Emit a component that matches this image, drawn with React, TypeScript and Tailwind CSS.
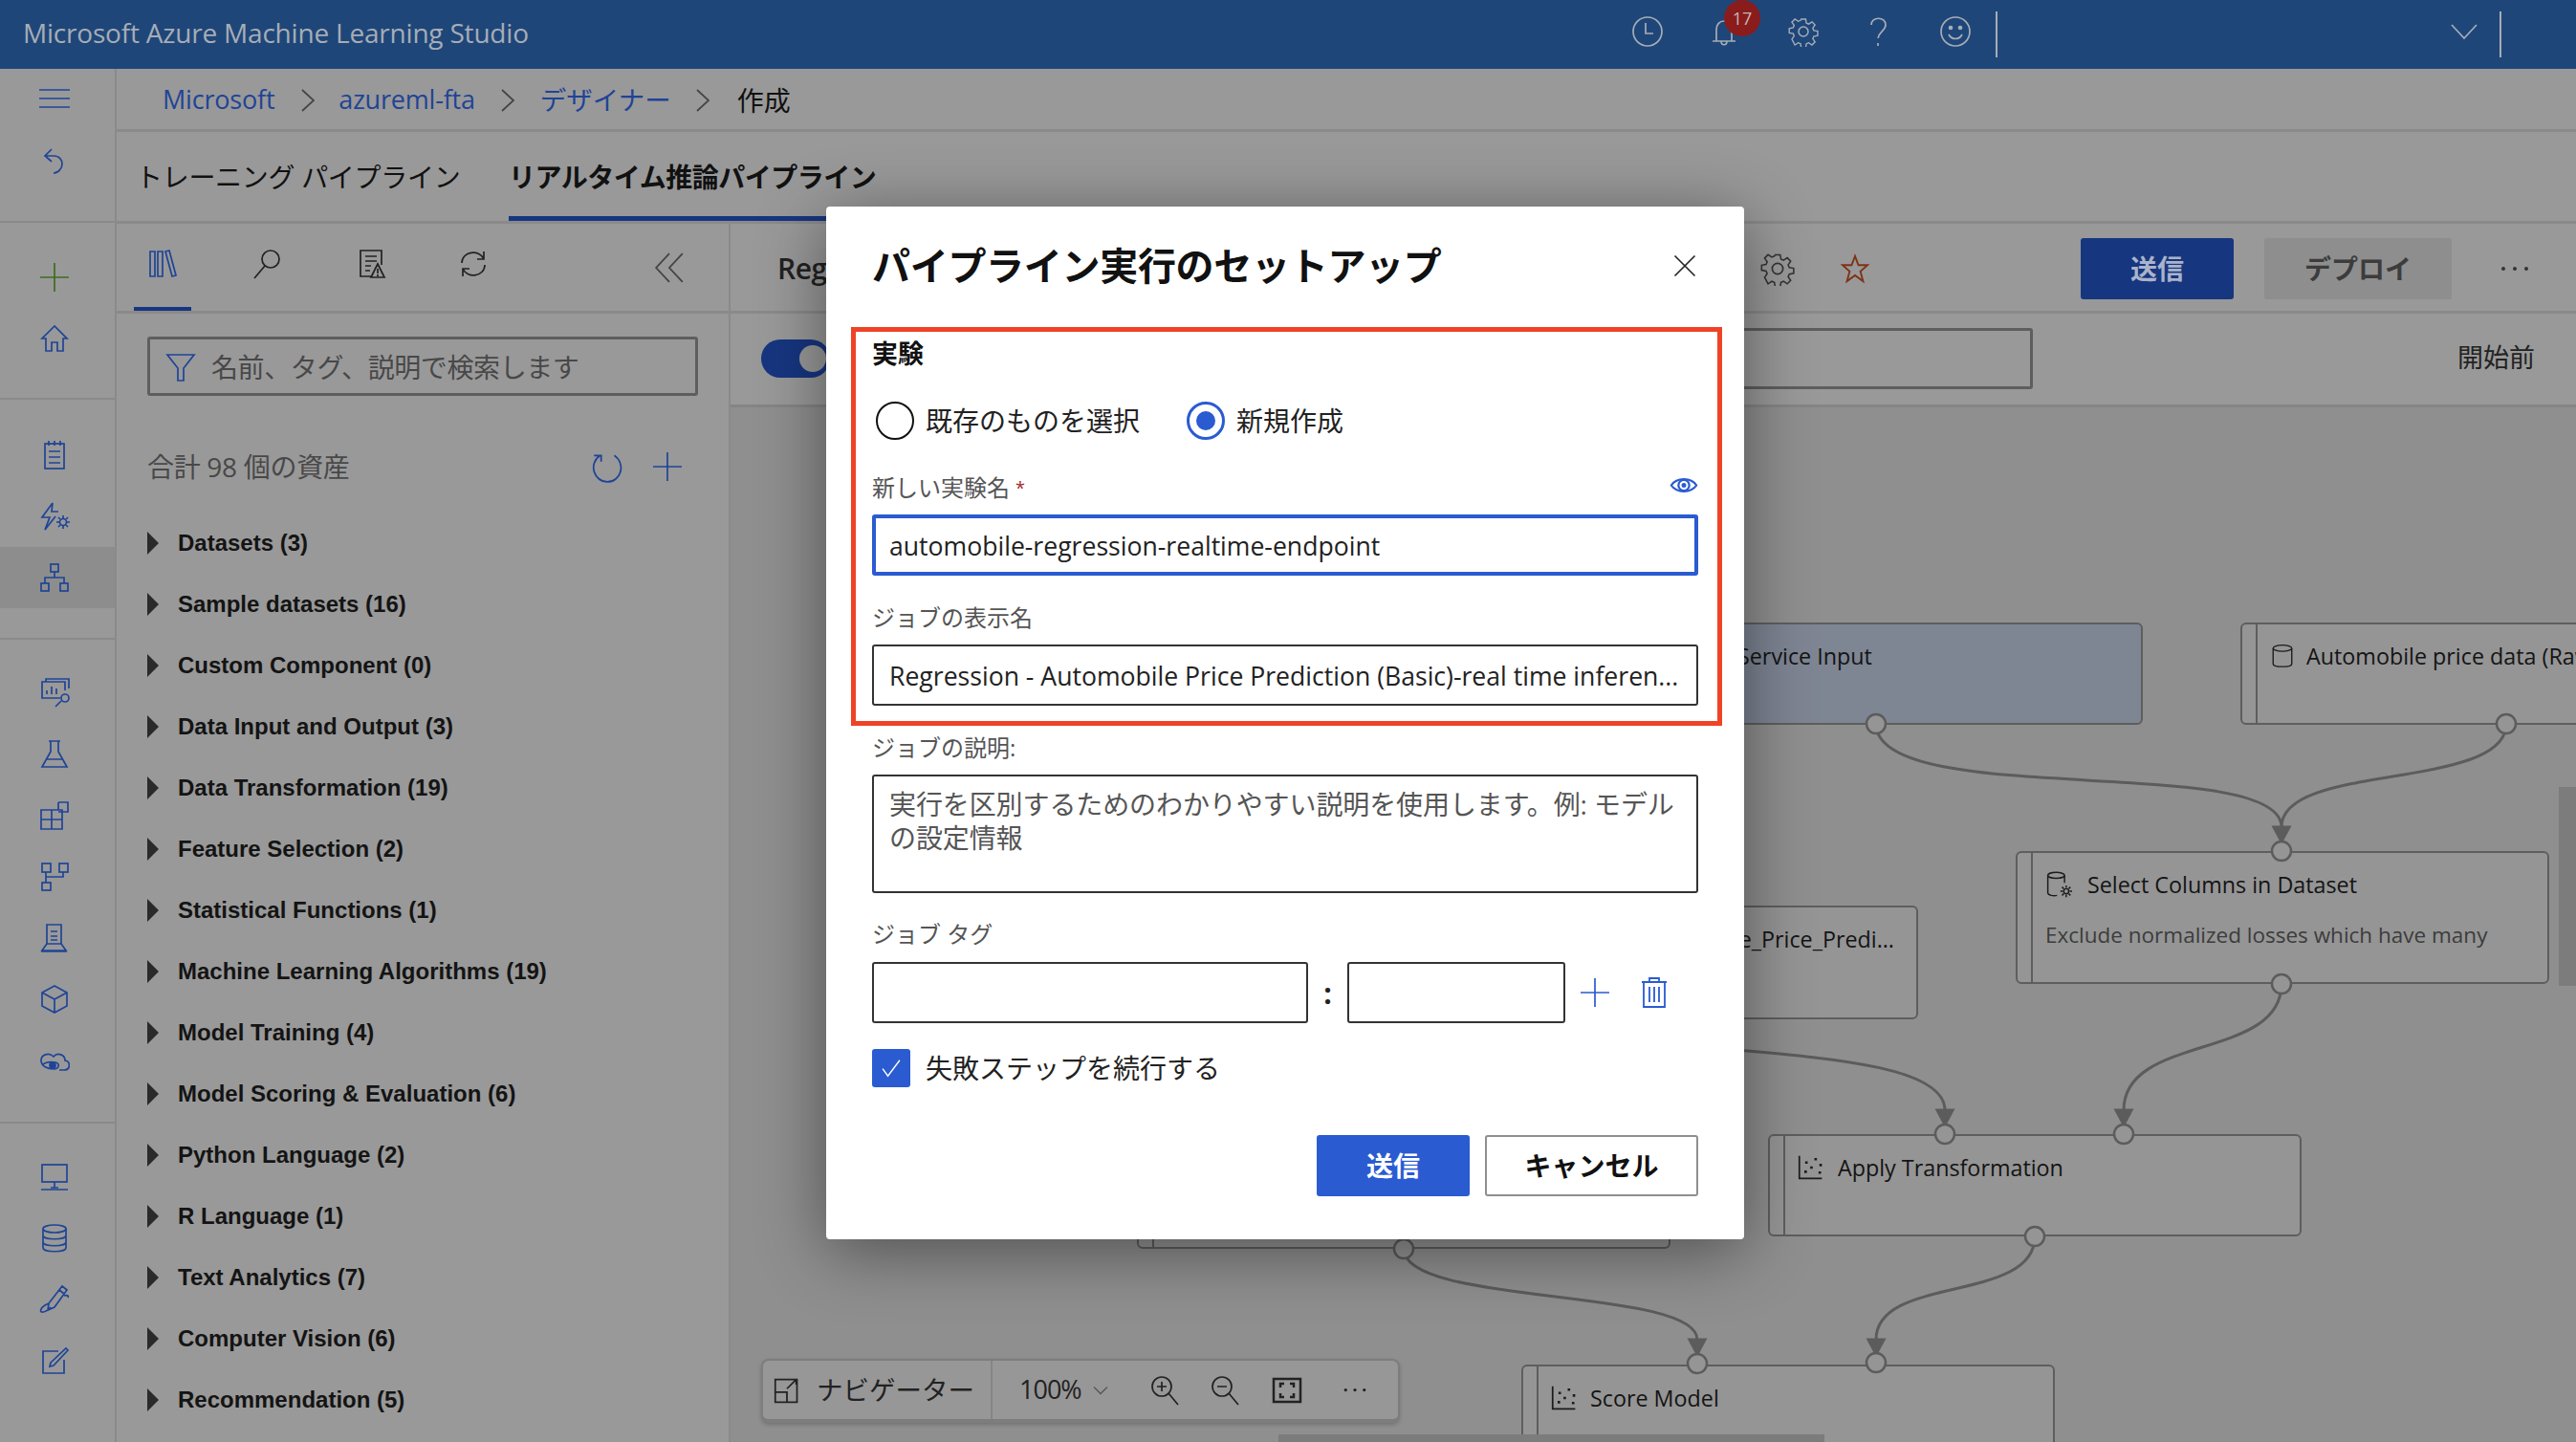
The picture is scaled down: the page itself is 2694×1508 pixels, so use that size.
import React from 'react';

const Svg: React.FC<{ className?: string; children: React.ReactNode; sw?: number }> = ({ className = 'w-[32px] h-[32px]', children, sw = 1.7 }) => (
  <svg viewBox="0 0 32 32" fill="none" stroke="currentColor" strokeWidth={sw} className={className}>
    {children}
  </svg>
);

const PlusIcon = ({ className }: { className?: string }) => (
  <Svg className={className}><path d="M16 1v30M1 16h30" /></Svg>
);

const Gear = ({ className }: { className?: string }) => (
  <Svg className={className} sw={1.5}>
    <circle cx="16" cy="16" r="5" />
    <path d="M13.500 2h5l.8 4.400 2.600 1.100 3.700-2.500 3.400 3.400-2.500 3.700 1.100 2.600 4.400.8v5l-4.400.8-1.100 2.600 2.500 3.700-3.400 3.400-3.700-2.500-2.600 1.100-.8 4.400h-5l-.8-4.400-2.600-1.100-3.700 2.500L3 24.500l2.500-3.700-1.100-2.600L0 17.400v-5l4.400-.8 1.100-2.600L3 5.300 6.400 1.900l3.700 2.500 2.600-1.100z" transform="translate(1.200 1.200) scale(.93)" />
  </Svg>
);

const Dots = ({ className = 'w-[32px] h-[8px]' }: { className?: string }) => (
  <svg viewBox="0 0 32 8" className={className} fill="currentColor">
    <circle cx="4" cy="4" r="2" /><circle cx="16" cy="4" r="2" /><circle cx="28" cy="4" r="2" />
  </svg>
);

const Scatter = () => (
  <Svg className="w-[28px] h-[28px]" sw={2}>
    <path d="M2 2v27h27" />
    <path d="M8 21h3M9 10h3M15 16h3M20 6h3M26 13h3M25 22h3" strokeWidth="3" />
  </Svg>
);

const railTop = [
  <Svg><path d="M0 7h32M0 16h32M0 25h32" /></Svg>,
  <Svg><path d="M13 3 6 10l7 6M6 10h9c6 0 9 4 9 8.500S20 28 15 28" /></Svg>,
];
const railCreate = [
  <span className="text-[#3f6d1e]"><PlusIcon className="w-[32px] h-[32px]" /></span>,
  <Svg><path d="M16 3 3 16h4v13h6v-9h6v9h6V16h4z" /></Svg>,
];
const railAuthor = [
  <Svg><rect x="6" y="4" width="20" height="26" /><path d="M10 1v5M16 1v5M22 1v5M10 12h12M10 18h12M10 24h12" /></Svg>,
  <Svg><path d="M14 2 3 17h8l-5 13 11-14M14 2l-1 9h7" /><circle cx="25" cy="22" r="3.500" /><path d="M25 15v3M25 26v3M18 22h3M29 22h3M20 17l2 2M28 25l2 2M30 17l-2 2M22 25l-2 2" /></Svg>,
  <Svg><rect x="12" y="2" width="8" height="8" /><rect x="2" y="22" width="8" height="8" /><rect x="22" y="22" width="8" height="8" /><path d="M16 10v6M6 22v-6h20v6" /></Svg>,
];
const railAssets = [
  <Svg><path d="M22 21H3V4h24v9M7 4V1h24v10" /><path d="M8 17v-4M13 17V9M18 17v-6M17 30l6-6" /><circle cx="27" cy="21" r="4" /></Svg>,
  <Svg><path d="M10 2h12M12 2v11L3 29h26l-9-16V2M8 21h16" /></Svg>,
  <Svg><path d="M2 10h22v20H2zM13 10v20M2 20h22M20 2h10v10H20" /><path d="M20 2v8" /></Svg>,
  <Svg><rect x="3" y="2" width="9" height="9" /><rect x="21" y="2" width="9" height="9" /><rect x="3" y="22" width="9" height="8" /><path d="M7 11v11M7 16h18v-5" /></Svg>,
  <Svg><path d="M8 2h15v20H8zM12 9h7M12 14h7M12 18h7M8 22l-5 7h25l-5-7M3 29v1h25v-1" /></Svg>,
  <Svg><path d="m16 2 13 7v14l-13 7-13-7V9zM3 9l13 7 13-7M16 16v14" /></Svg>,
  <Svg><path d="M21 26h5c7 0 7-9 1-10 0-6-8-9-12-4-5-5-13-2-13 4s7 9 13 9c6 0 7-6 2-7-5-1-11 0-13 2" /><circle cx="14" cy="21" r="3" fill="currentColor" /></Svg>,
];
const railManage = [
  <Svg><rect x="3" y="3" width="26" height="18" /><path d="M16 21v6M2 29h28M12 27h8" /></Svg>,
  <Svg><ellipse cx="16" cy="6" rx="12" ry="4" /><path d="M4 6v20c0 5 24 5 24 0V6M4 13c0 5 24 5 24 0M4 20c0 5 24 5 24 0" /></Svg>,
  <Svg><path d="m24 2 5 4-13 18-7 3 1-7zM21 6l5 4M10 20l-4 2c-5 3-6 8-2 7 3 0 6-3 8-5M26 12c3-1 5 0 4 2" /></Svg>,
  <Svg><path d="M26 15v14H4V6h16M12 18l16-15 2 2-15 16-4 1z" /></Svg>,
];

const RailGroup: React.FC<{ items: React.ReactNode[]; className: string; active?: number }> = ({ items, className, active }) => (
  <div className={`border-b-[2px] border-[#8a8a8a] ${className}`}>
    {items.map((icon, i) => (
      <div key={i} className={`h-[64px] pr-[7px] flex items-center justify-center ${i === active ? 'bg-[#8d8d8d]' : ''}`}>{icon}</div>
    ))}
  </div>
);

const Rail = () => (
  <div className="w-[122px] shrink-0 border-r-[2px] border-[#8a8a8a] text-[#1f4496]">
    <div className="h-[161px] border-b-[2px] border-[#8a8a8a]">
      <div className="h-[62px] pr-[7px] flex items-center justify-center">{railTop[0]}</div>
      <div className="h-[70px] pr-[7px] flex items-center justify-center">{railTop[1]}</div>
    </div>
    <RailGroup items={railCreate} className="h-[185px] pt-[25px]" />
    <RailGroup items={railAuthor} className="h-[251px] pt-[26px]" active={2} />
    <RailGroup items={railAssets} className="h-[506px] pt-[24px]" />
    <div className="pt-[24px]">
      {railManage.map((icon, i) => (
        <div key={i} className="h-[64px] pr-[7px] flex items-center justify-center">{icon}</div>
      ))}
    </div>
  </div>
);

const TopBar = () => (
  <div className="h-[72px] bg-[#1f4679] flex items-center pl-[24px] pr-[78px] text-[#a6adb6]">
    <span className="text-[28px] tracking-[-0.2px] pb-[4px]">Microsoft Azure Machine Learning Studio</span>
    <div className="ml-auto flex items-center h-full">
      <div className="w-[40px] flex justify-center -mt-[6px]"><Svg><circle cx="16" cy="16" r="15" /><path d="M14 7v11h8" /></Svg></div>
      <div className="relative w-[40px] ml-[40px] flex justify-center -mt-[6px]">
        <Svg><path d="M8 26V14c0-5 3-9 8-9s8 4 8 9v12M4 26h24M13 26c0 5 6 5 6 0" /></Svg>
        <div className="absolute left-[20px] top-[-17px] w-[38px] h-[38px] rounded-full bg-[#8a1c1c] flex items-center justify-center text-[18px] text-[#c9b5b5]">17</div>
      </div>
      <div className="w-[40px] ml-[43px] flex justify-center -mt-[6px]"><Gear className="w-[32px] h-[32px]" /></div>
      <div className="w-[40px] ml-[38px] flex justify-center -mt-[6px]"><Svg><path d="M9 9c0-9 15-9 15 0 0 6-7 7-8 14M16 28v3" /></Svg></div>
      <div className="w-[40px] ml-[41px] flex justify-center -mt-[6px]"><Svg><circle cx="16" cy="16" r="15" /><path d="M9 19c3 6 11 6 14 0" /><circle cx="11" cy="12" r="1.500" fill="currentColor" /><circle cx="21" cy="12" r="1.500" fill="currentColor" /></Svg></div>
      <div className="w-[2px] h-[48px] bg-[#a6adb6] ml-[22px]" />
      <div className="w-[40px] ml-[468px] flex justify-center -mt-[6px]"><Svg><path d="M3 9l13 14L29 9" /></Svg></div>
      <div className="w-[2px] h-[48px] bg-[#a6adb6] ml-[17px]" />
    </div>
  </div>
);

const Crumb = () => (
  <svg viewBox="0 0 16 24" fill="none" stroke="#444" strokeWidth="1.700" className="w-[16px] h-[24px]"><path d="M2 1l12 11L2 23" /></svg>
);

const Breadcrumbs = () => (
  <div className="h-[66px] border-b-[3px] border-[#8a8a8a] flex items-center pl-[48px] pt-[2px] text-[27px] text-[#1f4496]">
    <span className="tracking-[-0.2px]">Microsoft</span>
    <span className="ml-[27px]"><Crumb /></span>
    <span className="ml-[24px] tracking-[-0.2px]">azureml-fta</span>
    <span className="ml-[26px]"><Crumb /></span>
    <span className="ml-[26px] text-[27.500px]">デザイナー</span>
    <span className="ml-[25px]"><Crumb /></span>
    <span className="ml-[28px] text-[28px] text-[#111]">作成</span>
  </div>
);

const Tabs = () => (
  <div className="h-[96px] border-b-[3px] border-[#8a8a8a] flex pl-[20px] text-[28px] text-[#111]">
    <div className="w-[390px] flex items-center whitespace-nowrap tracking-[-0.3px]">トレーニング パイプライン</div>
    <div className="relative flex items-center font-bold whitespace-nowrap tracking-[-0.5px]">
      リアルタイム推論パイプライン
      <div className="absolute left-0 right-0 bottom-0 h-[5px] bg-[#173680]" />
    </div>
  </div>
);

const assets = [
  'Datasets (3)', 'Sample datasets (16)', 'Custom Component (0)', 'Data Input and Output (3)', 'Data Transformation (19)',
  'Feature Selection (2)', 'Statistical Functions (1)', 'Machine Learning Algorithms (19)', 'Model Training (4)',
  'Model Scoring & Evaluation (6)', 'Python Language (2)', 'R Language (1)', 'Text Analytics (7)', 'Computer Vision (6)', 'Recommendation (5)',
];

const AssetPanel = () => (
  <div className="w-[642px] shrink-0 border-r-[2px] border-[#8a8a8a] overflow-hidden">
    <div className="h-[94px] border-b-[3px] border-[#8a8a8a] flex items-center relative text-[#1f4496] pb-[8px]">
      <div className="absolute left-[18px] bottom-0 w-[60px] h-[4px] bg-[#173680]" />
      <span className="ml-[32px]"><Svg><path d="M3 3h5v26H3zM11 3h5v26h-5zM19 3l4-1 7 26-4 1z" /></Svg></span>
      <span className="ml-[77px] text-[#222]"><Svg><circle cx="20" cy="11" r="9" /><path d="M14 18 3 31" /></Svg></span>
      <span className="ml-[77px] text-[#222]"><Svg><path d="M17 29H5V2h22v15M10 8h12M10 13h12M10 18h6M10 23h5M23 16l-7 14h14zM23 21v5M23 27v2" /></Svg></span>
      <span className="ml-[75px] text-[#222]"><Svg><path d="M4 15C4 3 22 0 27 11M27 3v8h-7M28 17c0 12-18 15-23 4M5 29v-8h7" /></Svg></span>
      <span className="ml-[172px] mt-[8px] text-[#444]"><Svg className="w-[34px] h-[34px]"><path d="M16 2 3 16l13 14M29 2 16 16l13 14" /></Svg></span>
    </div>
    <div className="mt-[24px] ml-[32px] w-[576px] h-[62px] rounded-[3px] border-[3px] border-[#5e5e5e] flex items-center pl-[16px] pt-[2px] text-[28px] text-[#484848]">
      <span className="text-[#1f4496]"><Svg><path d="M2 3h28L19 17v13h-6V17z" /></Svg></span>
      <span className="ml-[16px] tracking-[-0.4px]">名前、タグ、説明で検索します</span>
    </div>
    <div className="mt-[57px] h-[34px] flex items-center ml-[32px] text-[28px] text-[#484848] tracking-[-0.3px]">
      <span>合計 98 個の資産</span>
      <span className="ml-auto text-[#1f4496]"><Svg className="w-[34px] h-[34px]"><path d="M10 5C-2 13 4 31 17 31s19-17 7-26M11 11V5H4" /></Svg></span>
      <span className="ml-[31px] mr-[48px] text-[#1f4496]"><PlusIcon className="w-[32px] h-[32px]" /></span>
    </div>
    <div className="mt-[31px] ml-[32px]">
      {assets.map((a) => (
        <div key={a} className="h-[64px] flex items-center">
          <div className="w-0 h-0 border-y-[12px] border-y-transparent border-l-[12px] border-l-[#2a2a2a]" />
          <span className="ml-[20px] font-['Liberation_Sans',sans-serif] font-bold text-[24px] text-[#141414]">{a}</span>
        </div>
      ))}
    </div>
  </div>
);

const DesignerBar = () => (
  <>
    <div className="h-[94px] border-b-[3px] border-[#8a8a8a] flex items-center pl-[49px] pr-[48px] pt-[2px]">
      <span className="w-[1030px] truncate text-[30px] font-semibold text-[#222] whitespace-nowrap tracking-[-0.5px]">Regression - Automobile Price Prediction (Basic)-real time inference</span>
      <span className="text-[#333] -ml-[2px]"><Gear className="w-[36px] h-[36px]" /></span>
      <span className="ml-[48px] text-[#7e3217]"><Svg className="w-[30px] h-[32px]" sw={2}><path d="m16 2 3.800 10H30l-8 7 3 11-9-6.500L7 30l3-11-8-7h10.200z" /></Svg></span>
      <div className="ml-auto w-[160px] h-[64px] rounded-[3px] bg-[#173680] flex items-center justify-center text-[28px] font-bold text-[#a9b3c9]">送信</div>
      <div className="ml-[32px] w-[196px] h-[64px] rounded-[3px] bg-[#8e8e8e] flex items-center justify-center text-[28px] font-bold text-[#3c3c3c]">デプロイ</div>
      <span className="ml-[50px] text-[#333]"><Dots /></span>
    </div>
    <div className="h-[98px] border-b-[3px] border-[#858585] flex items-center pl-[32px] pr-[43px] pb-[2px]">
      <div className="w-[72px] h-[40px] rounded-full bg-[#173680] flex items-center justify-end pr-[4px]"><div className="w-[28px] h-[28px] rounded-full bg-[#999]" /></div>
      <div className="ml-[60px] w-[1198px] h-[64px] rounded-[3px] border-[3px] border-[#5e5e5e]" />
      <span className="ml-auto text-[27px] text-[#222]">開始前</span>
    </div>
  </>
);

const Node: React.FC<{ className: string; children?: React.ReactNode; tint?: boolean }> = ({ className, children, tint }) => (
  <div className={`absolute flex rounded-[6px] border-[2px] border-[#5e5e5e] overflow-hidden ${tint ? 'bg-[#7e8593]' : 'bg-[#959595]'} ${className}`}>
    {!tint && <div className="w-[16px] shrink-0 border-r-[2px] border-[#5e5e5e]" />}
    <div className="flex-1 min-w-0">{children}</div>
  </div>
);

const NodeTitle: React.FC<{ icon?: React.ReactNode; children: React.ReactNode; gap: string }> = ({ icon, children, gap }) => (
  <div className="h-[66px] flex items-center pl-[13px] text-[23.300px] font-medium text-[#141414] whitespace-nowrap">
    <span className="w-[28px] shrink-0 text-[#1c1c1c]">{icon}</span>
    <span className={gap}>{children}</span>
  </div>
);

const ports = [
  [1962, 757], [2621, 757], [2386, 890], [2386, 1029], [2034, 1186], [2221, 1186], [2128, 1293], [1962, 1425], [1775, 1426], [1468, 1306],
];
const arrows = [[2386, 865], [2034, 1161], [2221, 1161], [1962, 1401], [1775, 1401]];

const Canvas = () => (
  <div className="relative flex-1 overflow-hidden bg-[#8f8f8f]">
    <Node tint className="left-[916px] top-[225px] w-[561px] h-[107px]">
      <div className="h-[66px] flex items-center pl-[135px] text-[23.300px] font-medium text-[#141414]">Service Input</div>
    </Node>
    <Node className="left-[1579px] top-[225px] w-[560px] h-[107px]">
      <NodeTitle gap="ml-[10px]" icon={<Svg className="w-[26px] h-[30px]"><ellipse cx="16" cy="6" rx="12" ry="4" /><path d="M4 6v20c0 5 24 5 24 0V6" /></Svg>}>Automobile price data (Raw)</NodeTitle>
    </Node>
    <Node className="left-[1344px] top-[464px] w-[558px] h-[139px]">
      <NodeTitle gap="ml-[16px]" icon={<Svg className="w-[28px] h-[30px]"><ellipse cx="13" cy="5" rx="10" ry="3.500" /><path d="M3 5v21c0 3 7 4 11 3M23 5v9" /><circle cx="25" cy="24" r="3" /><path d="M25 17v3M25 28v3M18 24h3M29 24h3M20 19l2 2M28 27l2 2M30 19l-2 2M22 27l-2 2" /></Svg>}>Select Columns in Dataset</NodeTitle>
      <div className="pl-[13px] mt-[3px] text-[22.500px] text-[#3c3c3c] whitespace-nowrap">Exclude normalized losses which have many</div>
    </Node>
    <Node className="left-[736px] top-[521px] w-[506px] h-[119px]">
      <div className="h-[66px] flex items-center justify-end pr-[23px] text-[23.300px] font-medium text-[#141414] whitespace-nowrap">Automobile_Price_Predi...</div>
    </Node>
    <Node className="left-[1085px] top-[760px] w-[558px] h-[107px]">
      <NodeTitle gap="ml-[14px]" icon={<Scatter />}>Apply Transformation</NodeTitle>
    </Node>
    <Node className="left-[425px] top-[764px] w-[558px] h-[116px]" />
    <Node className="left-[827px] top-[1001px] w-[558px] h-[120px]">
      <NodeTitle gap="ml-[13px]" icon={<Scatter />}>Score Model</NodeTitle>
    </Node>

    <svg viewBox="764 426 1930 1082" className="absolute left-0 top-0 w-[1930px] h-[1082px]" fill="none" stroke="#5c5c5c" strokeWidth="3">
      <path d="M1962 757c0 90 424 30 424 108" />
      <path d="M2621 757c0 70-235 40-235 108" />
      <path d="M1700 1085c120 20 334 15 334 76" />
      <path d="M2386 1029c0 80-165 52-165 132" />
      <path d="M2128 1293c0 70-166 40-166 108" />
      <path d="M1468 1306c0 60 307 40 307 95" />
      {arrows.map(([x, y]) => (
        <path key={`${x}-${y}`} d={`M${x - 8} ${y}h16l-8 15z`} fill="#5c5c5c" />
      ))}
      {ports.map(([x, y]) => (
        <circle key={`${x}-${y}`} cx={x} cy={y} r="10" fill="#959595" strokeWidth="2.500" />
      ))}
    </svg>

    <div className="absolute right-0 top-[397px] w-[18px] h-[208px] bg-[#7c7c7c]" />
    <div className="absolute left-[573px] bottom-0 w-[571px] h-[8px] bg-[#7c7c7c]" />

    <div className="absolute left-[32px] top-[995px] w-[668px] h-[67px] rounded-[8px] border-[2px] border-b-[4px] border-[#7d7d7d] bg-[#979797] flex items-center text-[#222] shadow-[0_2px_4px_rgba(0,0,0,0.2)]">
      <div className="w-[240px] shrink-0 h-full border-r-[2px] border-[#858585] flex items-center pl-[11px]">
        <Svg className="w-[28px] h-[28px]" sw={2}><path d="M2 3h26v27H2zM2 18h14v12M16 14 27 3M21 3h6v6" /></Svg>
        <span className="ml-[17px] text-[27.500px] whitespace-nowrap">ナビゲーター</span>
      </div>
      <span className="ml-[28px] text-[27px] tracking-[-1px]">100%</span>
      <Svg className="w-[16px] h-[16px] ml-[12px] text-[#555]" sw={2.500}><path d="M2 9l14 14L30 9" /></Svg>
      <Svg className="w-[32px] h-[32px] ml-[44px]"><circle cx="12" cy="12" r="10" /><path d="M12 7v10M7 12h10M19 19l10 12" /></Svg>
      <Svg className="w-[32px] h-[32px] ml-[31px]"><circle cx="12" cy="12" r="10" /><path d="M7 12h10M19 19l10 12" /></Svg>
      <Svg className="w-[32px] h-[32px] ml-[32px]" sw={2.500}><path d="M2 4h28v24H2zM9 13V9h4M23 13V9h-4M9 19v4h4M23 19v4h-4" /></Svg>
      <span className="ml-[42px]"><Dots className="w-[26px] h-[7px]" /></span>
    </div>
  </div>
);

const labelCls = 'h-[30px] flex items-center text-[24px] text-[#555] whitespace-nowrap';
const inputCls = 'h-[64px] rounded-[3px] border-[2px] border-[#333] flex items-center pl-[16px] pt-[3px] text-[26.600px] whitespace-nowrap';

const Dialog = () => (
  <div className="absolute left-[864px] top-[216px] w-[960px] h-[1080px] rounded-[4px] bg-white flex flex-col shadow-[0_12px_70px_rgba(0,0,0,0.45)]">
    <div className="h-[124px] mb-[2px] shrink-0 flex items-center justify-between pl-[48px] pr-[50px]">
      <h1 className="text-[40px] font-bold text-[#111] tracking-[-0.3px] whitespace-nowrap">パイプライン実行のセットアップ</h1>
      <Svg className="w-[24px] h-[24px] text-[#222]" sw={2.200}><path d="M2 2l28 28M30 2 2 30" /></Svg>
    </div>
    <div className="ml-[26px] w-[911px] h-[417px] shrink-0 border-[5px] border-[#ee4327] pt-[6px] pl-[17px] pr-[20px]">
      <div className="h-[34px] flex items-center text-[27px] font-bold text-[#111]">実験</div>
      <div className="mt-[33px] h-[40px] flex items-center text-[28px] text-[#222]">
        <div className="w-[40px] h-[40px] ml-[4px] rounded-full border-[2px] border-[#111]" />
        <span className="ml-[12px]">既存のものを選択</span>
        <div className="w-[40px] h-[40px] ml-[49px] rounded-full border-[3px] border-[#2a5bd1] flex items-center justify-center"><div className="w-[20px] h-[20px] rounded-full bg-[#2a5bd1]" /></div>
        <span className="ml-[12px]">新規作成</span>
      </div>
      <div className={`mt-[35px] ${labelCls}`}>
        新しい実験名<span className="ml-[6px] text-[18px] text-[#a4262c]">*</span>
        <svg viewBox="0 0 32 20" fill="none" stroke="#2a5bd1" strokeWidth="2.400" className="ml-auto w-[30px] h-[19px] -mt-[6px]">
          <path d="M2 10C8 1 24 1 30 10 24 19 8 19 2 10z" /><circle cx="16" cy="10" r="6" /><circle cx="16" cy="10" r="1.500" fill="#2a5bd1" />
        </svg>
      </div>
      <div className="mt-[13px] h-[64px] rounded-[3px] border-[4px] border-[#2a5bd1] flex items-center pl-[14px] pt-[3px] text-[26.600px] text-[#222] whitespace-nowrap">automobile-regression-realtime-endpoint</div>
      <div className={`mt-[29px] ${labelCls}`}>ジョブの表示名</div>
      <div className={`mt-[13px] text-[#222] ${inputCls}`}>Regression - Automobile Price Prediction (Basic)-real time inferen...</div>
    </div>
    <div className="px-[48px]">
      <div className={`mt-[8px] ${labelCls}`}>ジョブの説明:</div>
      <div className="mt-[13px] h-[124px] rounded-[3px] border-[2px] border-[#333] pl-[16px] pr-[12px] pt-[12px] text-[28px] leading-[35px] tracking-[-0.1px] text-[#555]">実行を区別するためのわかりやすい説明を使用します。例: モデルの設定情報</div>
      <div className={`mt-[28px] ${labelCls}`}>ジョブ タグ</div>
      <div className="mt-[14px] flex items-center">
        <div className={`w-[456px] ${inputCls}`} />
        <span className="w-[41px] text-center text-[30px] font-bold text-[#222]">:</span>
        <div className={`w-[228px] ${inputCls}`} />
        <span className="ml-[15px] text-[#2a5bd1]"><PlusIcon className="w-[32px] h-[32px]" /></span>
        <span className="ml-[32px]">
          <svg viewBox="0 0 28 34" fill="none" stroke="#2a5bd1" strokeWidth="1.800" className="w-[28px] h-[34px]"><path d="M1 6h26M9 6V2h10v4M3 6v26h22V6M9 11v16M14 11v16M19 11v16" /></svg>
        </span>
      </div>
      <div className="mt-[26px] flex items-center">
        <div className="w-[40px] h-[40px] rounded-[3px] bg-[#2a5bd1] flex items-center justify-center text-white">
          <Svg className="w-[22px] h-[22px]" sw={2}><path d="M3 17l8 11L29 4" /></Svg>
        </div>
        <span className="ml-[16px] text-[28px] text-[#222]">失敗ステップを続行する</span>
      </div>
      <div className="mt-[49px] flex justify-end gap-[16px]">
        <div className="w-[160px] h-[64px] rounded-[3px] bg-[#2a5bd1] flex items-center justify-center text-[28px] font-bold text-white">送信</div>
        <div className="w-[223px] h-[64px] rounded-[3px] border-[2px] border-[#8f8f8f] flex items-center justify-center text-[28px] font-bold text-[#111]">キャンセル</div>
      </div>
    </div>
  </div>
);

export default function App() {
  return (
    <div className="relative w-[2694px] h-[1508px] overflow-hidden bg-[#999999] font-['Open_Sans','Noto_Sans_CJK_JP',sans-serif]">
      <TopBar />
      <div className="flex h-[1436px]">
        <Rail />
        <div className="flex-1 min-w-0 flex flex-col">
          <Breadcrumbs />
          <Tabs />
          <div className="flex-1 flex min-h-0">
            <AssetPanel />
            <div className="flex-1 min-w-0 flex flex-col">
              <DesignerBar />
              <Canvas />
            </div>
          </div>
        </div>
      </div>
      <Dialog />
    </div>
  );
}
